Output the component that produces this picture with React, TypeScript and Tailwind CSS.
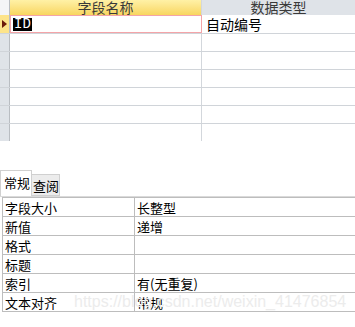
const font = { fontFamily: '"Noto Sans CJK SC", "Noto Sans", sans-serif' }

const props = [
  ['字段大小', '长整型'],
  ['新值', '递增'],
  ['格式', ''],
  ['标题', ''],
  ['索引', '有(无重复)'],
  ['文本对齐', '常规'],
]

export default function App() {
  return (
    <div className="relative w-[355px] h-[327px] bg-white overflow-hidden" style={font}>
      {/* design grid */}
      <div className="flex flex-col">
        <div className="flex h-[15px]">
          <div className="w-[10px] shrink-0 bg-[#f4f5f7] border-r border-[#b9bdc2]" />
          <div className="w-[192px] shrink-0 bg-gradient-to-b from-[#fff1a6] to-[#f8d65e] border-r border-[#d3d7dc] text-center text-[14px] leading-[15px] text-[#3a3a3a]">
            字段名称
          </div>
          <div className="flex-1 bg-[#dfe3e8] text-center text-[14px] leading-[15px] text-[#3a3a3a]">
            数据类型
          </div>
        </div>

        <div className="flex h-[19px] border-b border-[#d0d4d9]">
          <div className="w-[10px] shrink-0 bg-[#fde48a] border-r border-[#b9bdc2] flex items-center">
            <div className="ml-[2px] w-0 h-0 border-y-[4px] border-y-transparent border-l-[5px] border-l-[#6b1a0a]" />
          </div>
          <div className="w-[192px] shrink-0 border-[#f4a4a8] border-[1.5px] flex items-center pl-[2px]">
            <span className="bg-black text-white text-[14px] leading-[13px] px-[1px]" style={{ fontFamily: '"Liberation Mono", monospace' }}>
              ID
            </span>
          </div>
          <div className="flex-1 flex items-center pl-[4px] text-[14px] leading-none text-black">自动编号</div>
        </div>

        {[0, 1, 2, 3, 4, 5].map((i) => (
          <div key={i} className={`flex ${i < 5 ? 'h-[18px] border-b border-[#d0d4d9]' : 'h-[17px]'}`}>
            <div className="w-[10px] shrink-0 bg-[#dfe3e8] border-r border-[#b9bdc2]" />
            <div className="w-[192px] shrink-0 border-r border-[#d3d7dc]" />
            <div className="flex-1" />
          </div>
        ))}
      </div>

      {/* property sheet tabs */}
      <div className="mt-[30px] flex items-end h-[26px] border-b border-[#dadada]">
        <div className="h-[26px] w-[32px] border border-b-0 border-[#d0d0d0] bg-white text-[13px] leading-none pl-[3px] pt-[5px] text-black whitespace-nowrap">
          常规
        </div>
        <div className="h-[22px] w-[28px] border border-l-0 border-[#d0d0d0] bg-[#ececec] text-[13px] leading-none pl-[1px] pt-[4px] text-black whitespace-nowrap">
          查阅
        </div>
      </div>

      <div className="ml-[2px] border-t border-l border-[#bdbdbd]">
        {props.map(([k, v]) => (
          <div key={k} className="flex h-[19px] border-b border-[#bdbdbd] text-[13px] leading-none text-black">
            <div className="w-[132px] shrink-0 border-r border-[#bdbdbd] flex items-center pl-[2px]">{k}</div>
            <div className="flex-1 flex items-center pl-[2px]">{v}</div>
          </div>
        ))}
      </div>

      <div
        className="absolute left-[74px] top-[290px] text-[16px] text-[#ececec] whitespace-nowrap pointer-events-none"
        style={{ fontFamily: '"Liberation Sans", Arial, sans-serif' }}
      >
        https://blog.csdn.net/weixin_41476854
      </div>
    </div>
  )
}
